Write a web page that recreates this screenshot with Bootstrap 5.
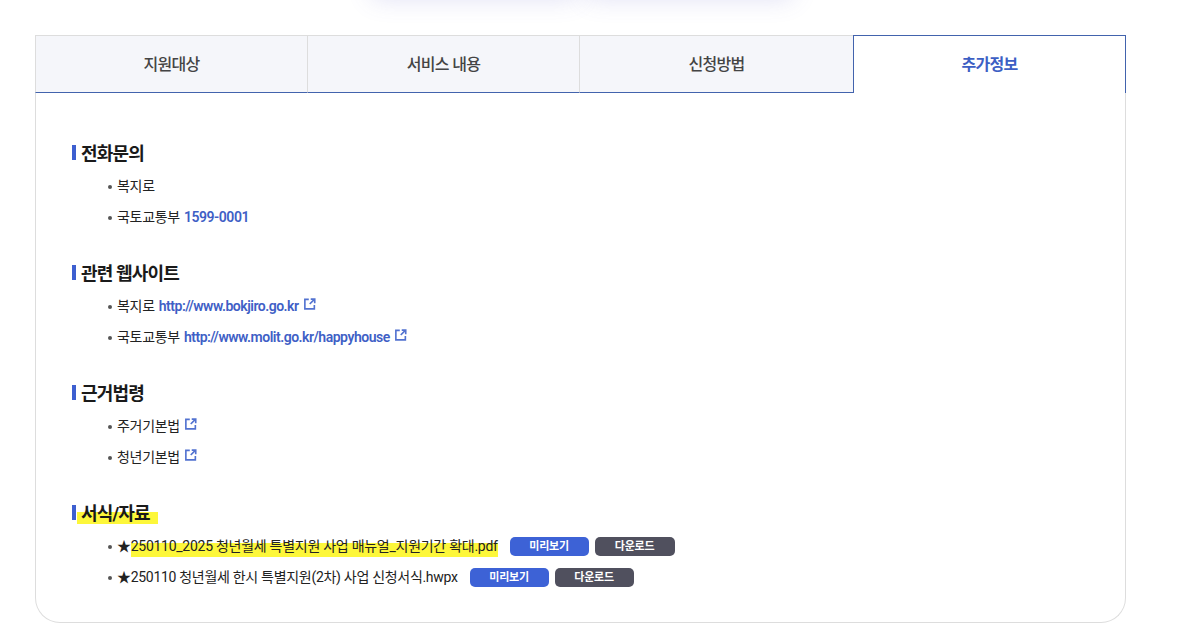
<!DOCTYPE html>
<html lang="ko">
<head>
<meta charset="utf-8">
<title>추가정보</title>
<link rel="stylesheet" href="https://cdn.jsdelivr.net/npm/bootstrap@5.3.0/dist/css/bootstrap.min.css">
<style>
html,body{height:640px;overflow:hidden;background:#fff}
body{font-family:Roboto,"Noto Sans CJK KR",sans-serif;font-size:14px;color:#222;letter-spacing:-.3px}
.top-strip{height:35px;overflow:hidden;padding-left:372px;gap:10px}
.top-tile{width:205px;height:40px;margin-top:-42px;background:#fff;box-shadow:0 0 26px rgba(90,90,200,.2)}
.panel-wrap{width:1091px;margin-left:35px}
.tab-row{height:58px}
.tab-cell{height:58px;padding-top:1px;background:#f5f6fa;border-top:1px solid #ddd;border-right:1px solid #ddd;border-bottom:1px solid #4263ad;color:#444;font-size:16px;font-weight:500;letter-spacing:-.7px;width:272px}
.tab-cell:first-child{border-left:1px solid #ddd;width:273px}
.tab-cell:nth-child(3){width:273px;border-right:0}
.tab-cell.is-on{width:273px;background:#fff;border:1px solid #4263ad;border-bottom:0;color:#3d5fc4;font-weight:700}
.panel-body{height:530px;border:1px solid #ddd;border-top:0;border-radius:0 0 25px 25px;padding:51px 36px 0}
.sec{height:120px}
.sec-title{height:20px;font-size:18px;font-weight:700;color:#1a1a1a;letter-spacing:-.85px;line-height:20px;margin:0 0 7px;padding-left:9px;position:relative}
.sec-title::before{content:"";position:absolute;left:0;top:1px;width:4px;height:15px;background:#3d5fd0}
.item-list{list-style:none;margin:0;padding:0 0 0 45px}
.item-list li{height:31px;line-height:31px;position:relative;white-space:nowrap;display:flex;align-items:center}
.item-list li::before{content:"";position:absolute;left:-9px;top:14px;width:4px;height:4px;border-radius:50%;background:#555}
.blue-text{color:#3f5fc6;font-weight:600;text-decoration:none;letter-spacing:-.45px;margin-left:4px}
.url-text{letter-spacing:-.49px}
.ext-ico{width:11.5px;height:12px;margin-left:5.5px;margin-top:-5px;flex:none}
.mark-hl{letter-spacing:-.27px;background:linear-gradient(transparent 12px,#fdf73a 12px,#fdf73a 25.5px,transparent 25.5px)}
.head-hl{background:linear-gradient(transparent 45%,#fdf73a 45%,#fdf73a 100%);padding:0 8px 0 4px;margin-left:-4px}
.file-btn{height:19px;line-height:19px;width:79px;border-radius:5px;font-size:11px;font-weight:700;color:#fff;text-align:center;letter-spacing:-.2px;padding:0;border:0;margin-left:6px;background:#50505e}
.file-btn.is-view{background:#3d62d6;margin-left:12px}
.star{font-size:14px}
.wide-btn.file-btn{width:80px}
</style>
</head>
<body>
<div class="top-strip d-flex">
  <div class="top-tile"></div>
  <div class="top-tile"></div>
</div>
<div class="panel-wrap">
  <div class="tab-row d-flex">
    <div class="tab-cell d-flex align-items-center justify-content-center">지원대상</div>
    <div class="tab-cell d-flex align-items-center justify-content-center">서비스 내용</div>
    <div class="tab-cell d-flex align-items-center justify-content-center">신청방법</div>
    <div class="tab-cell is-on d-flex align-items-center justify-content-center">추가정보</div>
  </div>
  <div class="panel-body">
    <section class="sec">
      <h3 class="sec-title">전화문의</h3>
      <ul class="item-list">
        <li>복지로</li>
        <li>국토교통부 <a class="blue-text" href="#">1599-0001</a></li>
      </ul>
    </section>
    <section class="sec">
      <h3 class="sec-title">관련 웹사이트</h3>
      <ul class="item-list">
        <li>복지로 <a class="blue-text url-text" href="#">http://www.bokjiro.go.kr</a>
          <svg class="ext-ico" viewBox="0 0 12 12" fill="none" stroke="#5272d0" stroke-width="1.7"><path d="M5 1.2H.9v9.9h9.9V7"/><path d="M7 .9h4.2v4.2M10.8 1.2 6 6"/></svg></li>
        <li>국토교통부 <a class="blue-text url-text" href="#">http://www.molit.go.kr/happyhouse</a>
          <svg class="ext-ico" viewBox="0 0 12 12" fill="none" stroke="#5272d0" stroke-width="1.7"><path d="M5 1.2H.9v9.9h9.9V7"/><path d="M7 .9h4.2v4.2M10.8 1.2 6 6"/></svg></li>
      </ul>
    </section>
    <section class="sec">
      <h3 class="sec-title">근거법령</h3>
      <ul class="item-list">
        <li>주거기본법
          <svg class="ext-ico" viewBox="0 0 12 12" fill="none" stroke="#5272d0" stroke-width="1.7"><path d="M5 1.2H.9v9.9h9.9V7"/><path d="M7 .9h4.2v4.2M10.8 1.2 6 6"/></svg></li>
        <li>청년기본법
          <svg class="ext-ico" viewBox="0 0 12 12" fill="none" stroke="#5272d0" stroke-width="1.7"><path d="M5 1.2H.9v9.9h9.9V7"/><path d="M7 .9h4.2v4.2M10.8 1.2 6 6"/></svg></li>
      </ul>
    </section>
    <section class="sec">
      <h3 class="sec-title"><span class="head-hl">서식/자료</span></h3>
      <ul class="item-list">
        <li><span class="star">★</span><span class="mark-hl">250110_2025 청년월세 특별지원 사업 매뉴얼_지원기간 확대.pdf</span>
          <button type="button" class="btn file-btn is-view">미리보기</button><button type="button" class="btn file-btn wide-btn">다운로드</button></li>
        <li><span class="star">★</span><span>250110 청년월세 한시 특별지원(2차) 사업 신청서식.hwpx</span>
          <button type="button" class="btn file-btn is-view">미리보기</button><button type="button" class="btn file-btn">다운로드</button></li>
      </ul>
    </section>
  </div>
</div>
<script src="https://cdn.jsdelivr.net/npm/bootstrap@5.3.0/dist/js/bootstrap.bundle.min.js"></script>
</body>
</html>
